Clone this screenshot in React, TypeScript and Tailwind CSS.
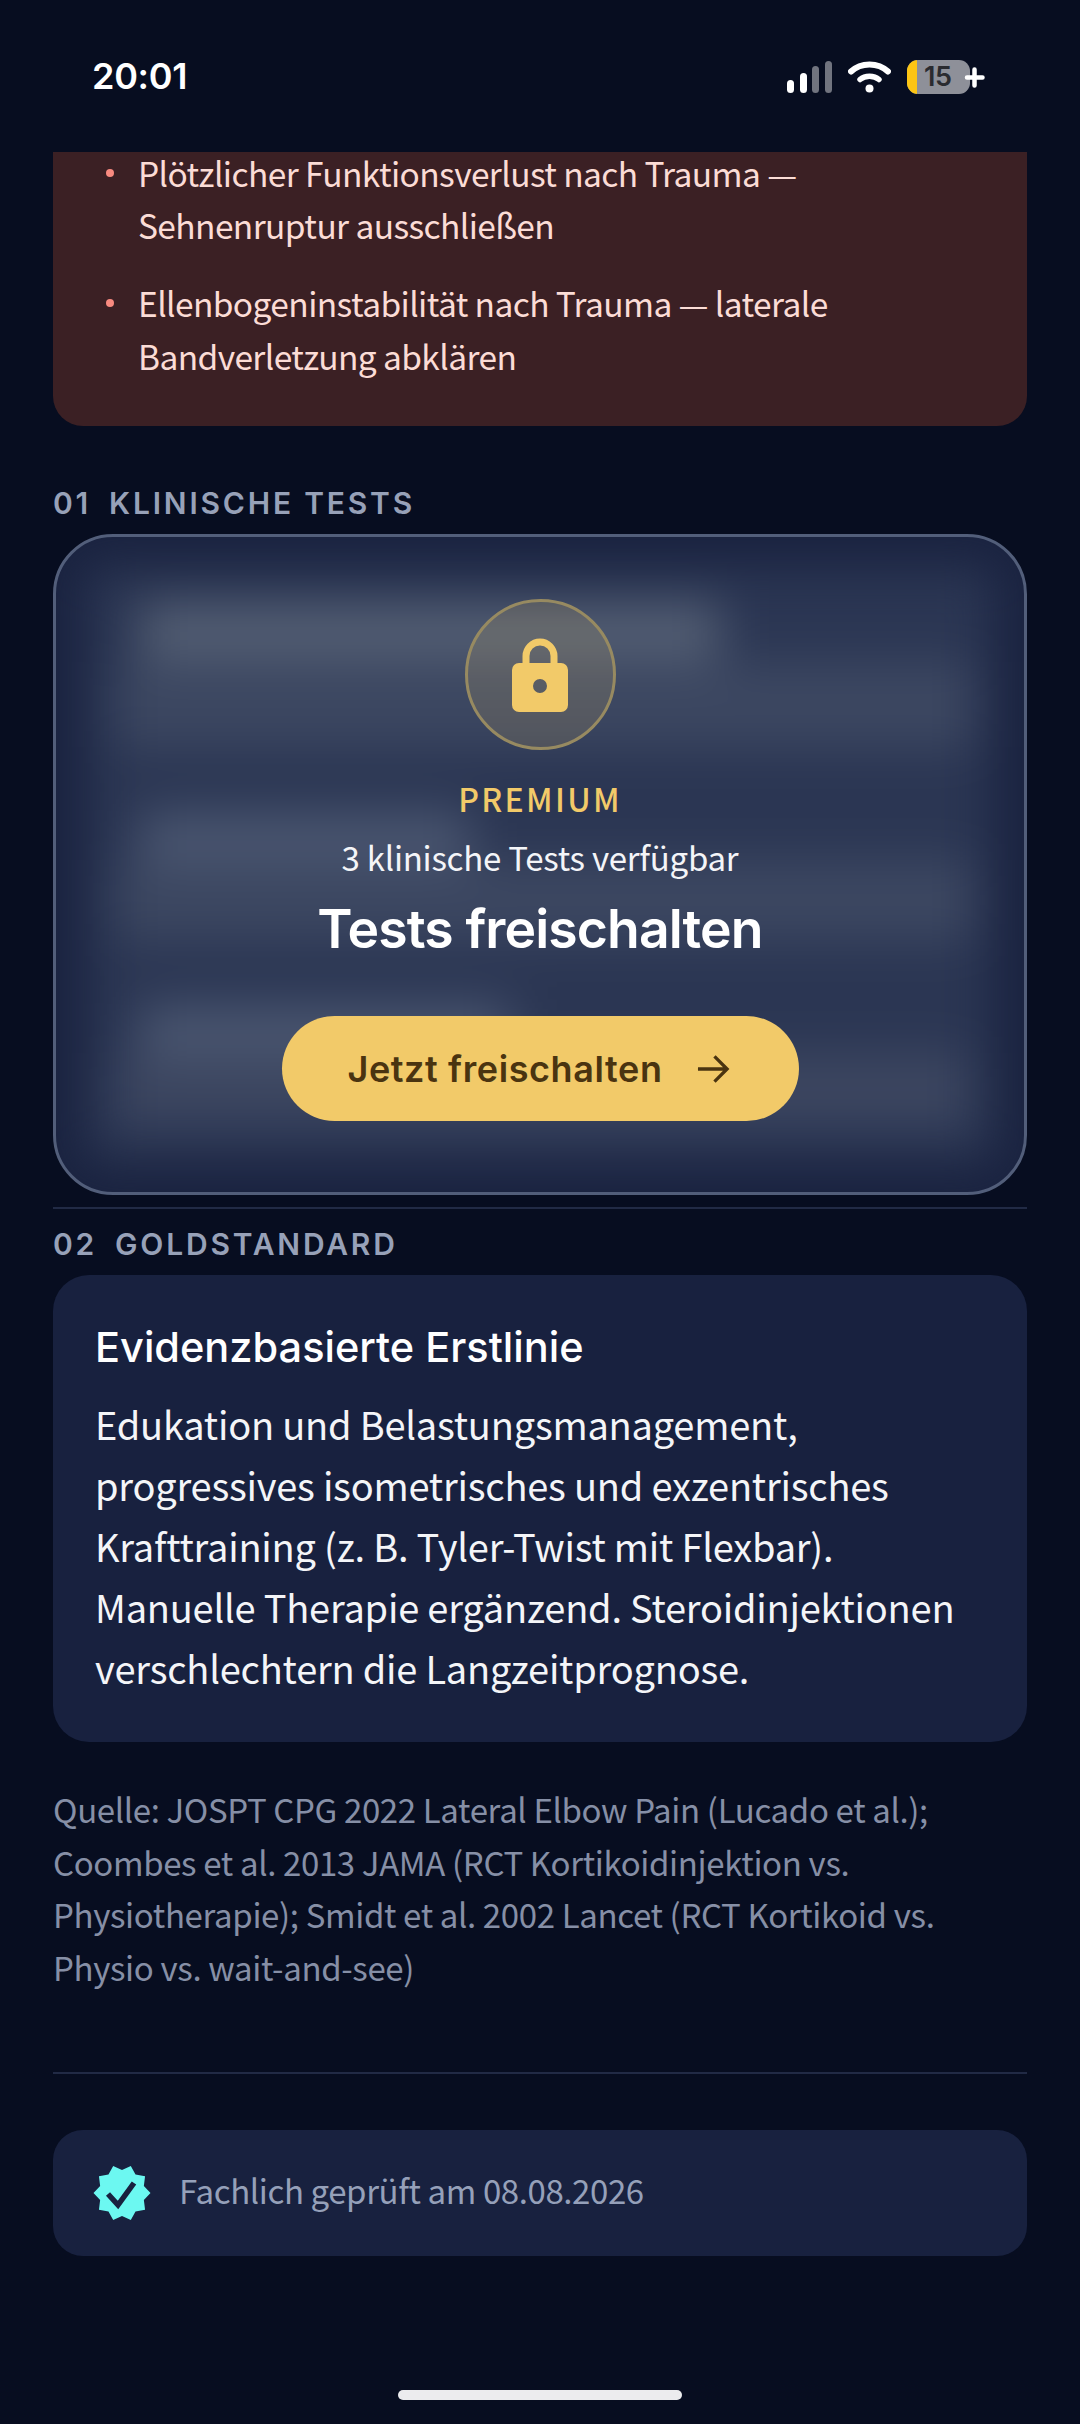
import React from "react";

const body = "font-['Noto_Sans_CJK_SC','Noto_Sans',sans-serif]";
const head = "font-['Inter','Noto_Sans',sans-serif]";

function Label({ n, t, cls }: { n: string; t: string; cls: string }) {
  return (
    <div className={`${head} flex h-[36px] items-center gap-[18px] text-[30px] leading-[36px] font-semibold tracking-[2.8px] text-[#97a1b8] ${cls}`}>
      <span>{n}</span>
      <span>{t}</span>
    </div>
  );
}

function Bullet({ a, b }: { a: string; b: string }) {
  return (
    <li className="flex">
      <span className="mt-[22px] mr-[24px] h-[8px] w-[8px] shrink-0 rounded-full bg-[#f98a80]" />
      <span>
        {a}
        <br />
        {b}
      </span>
    </li>
  );
}

const star = Array.from({ length: 20 }, (_, i) => {
  const r = i % 2 === 0 ? 28.5 : 23;
  const ang = (i * 18 * Math.PI) / 180;
  return `${(29 + r * Math.cos(ang)).toFixed(2)},${(28 + r * Math.sin(ang)).toFixed(2)}`;
}).join(" ");

export default function App() {
  return (
    <div className={`${body} flex h-[2424px] w-full flex-col overflow-hidden bg-[#070d20] px-[53px]`}>
      {/* Status bar */}
      <div className="-mx-[53px] flex h-[152px] shrink-0 items-start justify-between pt-[56px] pr-[92px] pl-[92px]">
        <span className={`${head} text-[36px] leading-[40px] font-semibold tracking-[-0.3px] text-white`}>20:01</span>
        <div className="mt-[4px] flex items-center gap-[16px]">
          <svg width="45" height="32" viewBox="0 0 45 32">
            <rect x="0" y="19" width="7" height="13" rx="3.5" fill="#fff" />
            <rect x="13" y="12" width="7" height="20" rx="3.5" fill="#fff" />
            <rect x="25" y="5" width="7" height="27" rx="3.5" fill="#71747f" />
            <rect x="38" y="0" width="7" height="32" rx="3.5" fill="#71747f" />
          </svg>
          <svg width="43" height="32" viewBox="0 0 43 32" fill="none" stroke="#fff" strokeLinecap="round">
            <path d="M3 10.5C13 1 30 1 40 10.5" strokeWidth="6" />
            <path d="M12 18.5C17 14 26 14 31 18.5" strokeWidth="5.5" />
            <circle cx="21.5" cy="27.5" r="4" fill="#fff" stroke="none" />
          </svg>
          <div className="relative flex h-[34px] w-[81px] items-center">
            <div className="relative flex h-[34px] w-[63px] items-center overflow-hidden rounded-[11px] bg-[#8e9099]">
              <div className="h-full w-[10px] bg-[#fdc513]" />
              <span className={`${head} ml-[7px] text-[27px] leading-[34px] font-semibold tracking-[-0.5px] text-[#2a2b30]`}>15</span>
            </div>
            <svg className="absolute top-[7px] left-[57px]" width="21" height="21" viewBox="0 0 21 21" stroke="#fff" strokeWidth="4.5" strokeLinecap="round">
              <path d="M10.5 2.5v16M3 10.5h15.5" />
            </svg>
          </div>
        </div>
      </div>

      {/* Warning card */}
      <div className="h-[274px] shrink-0 rounded-b-[30px] bg-[#3b2024] pl-[53px] text-[33.5px] leading-[52.5px] tracking-[-0.6px] text-[#fbdcd6]">
        <ul className="-mt-[5.5px] flex flex-col gap-[25.5px]">
          <Bullet a="Plötzlicher Funktionsverlust nach Trauma —" b="Sehnenruptur ausschließen" />
          <Bullet a="Ellenbogeninstabilität nach Trauma — laterale" b="Bandverletzung abklären" />
        </ul>
      </div>

      <Label n="01" t="KLINISCHE TESTS" cls="mt-[59px]" />

      {/* Locked card */}
      <div className="relative mt-[13px] flex h-[661px] shrink-0 flex-col items-center overflow-hidden rounded-[60px] border-[3px] border-[#525e7a] bg-[#1a2340]">
        <div className="absolute inset-0 blur-[24px]">
          <div className="absolute top-[30px] right-[30px] bottom-[30px] left-[30px] bg-[#2b3653]" />
          <div className="absolute top-[125px] right-[50px] left-[60px] h-[85px] bg-[#3c4761]" />
          <div className="absolute top-[65px] left-[84px] h-[58px] w-[580px] bg-[#535e73]" />
          <div className="absolute top-[323px] right-[50px] left-[60px] h-[80px] bg-[#3c4761]" />
          <div className="absolute top-[275px] left-[84px] h-[52px] w-[330px] bg-[#4a5670]" />
          <div className="absolute top-[516px] right-[55px] left-[60px] h-[72px] bg-[#3c4660]" />
          <div className="absolute top-[468px] left-[84px] h-[52px] w-[370px] bg-[#4a5670]" />
        </div>
        <div className="relative flex flex-col items-center">
          <div className="mt-[62px] flex h-[151px] w-[151px] items-center justify-center rounded-full border-[3px] border-[#978a61] bg-[#f2ca69]/15">
            <svg width="56" height="74" viewBox="0 0 56 74">
              <path d="M14 28V18a14 14 0 0 1 28 0v10" fill="none" stroke="#f2ca69" strokeWidth="7" />
              <path fillRule="evenodd" fill="#f2ca69" d="M7 25h42a7 7 0 0 1 7 7v35a7 7 0 0 1-7 7H7a7 7 0 0 1-7-7V32a7 7 0 0 1 7-7Zm21 16a7 7 0 1 0 0 14 7 7 0 0 0 0-14Z" />
            </svg>
          </div>
          <div className="mt-[28px] text-[32px] leading-[40px] font-medium tracking-[2.3px] text-[#f2ca69]">PREMIUM</div>
          <div className="mt-[19px] text-[33px] leading-[40px] tracking-[-0.25px] text-[#f4f5f8]">3 klinische Tests verfügbar</div>
          <div className={`${head} mt-[22px] text-[53.5px] leading-[60px] font-semibold tracking-[-0.9px] text-white`}>Tests freischalten</div>
          <div className="mt-[57px] flex h-[105px] w-[517px] items-center justify-center gap-[34px] rounded-full bg-[#f2ca69] pr-[3px] text-[#4a3410]">
            <span className={`${head} text-[36px] leading-[40px] font-semibold tracking-[0.6px]`}>Jetzt freischalten</span>
            <svg width="33" height="30" viewBox="0 0 34 30" fill="none" stroke="#4a3410" strokeWidth="3.4">
              <path d="M1 15h30M18 2l13 13-13 13" />
            </svg>
          </div>
        </div>
      </div>

      <div className="mt-[12px] h-[2px] shrink-0 bg-[#212a45]" />
      <Label n="02" t="GOLDSTANDARD" cls="mt-[17px]" />

      {/* Gold standard */}
      <div className="mt-[13px] flex h-[467px] shrink-0 flex-col rounded-[36px] bg-[#18213f] px-[42px] pt-[49px] text-white">
        <div className={`${head} text-[41.5px] leading-[46px] font-medium tracking-[0px]`}>Evidenzbasierte Erstlinie</div>
        <p className="mt-[23px] text-[38px] leading-[61px] tracking-[-0.22px] text-[#f4f5f8]">
          Edukation und Belastungsmanagement,
          <br />
          progressives isometrisches und exzentrisches
          <br />
          Krafttraining (z. B. Tyler-Twist mit Flexbar).
          <br />
          Manuelle Therapie ergänzend. Steroidinjektionen
          <br />
          verschlechtern die Langzeitprognose.
        </p>
      </div>

      <p className="mt-[41px] text-[33px] leading-[52.7px] tracking-[-0.36px] text-[#868fa6]">
        Quelle: JOSPT CPG 2022 Lateral Elbow Pain (Lucado et al.);
        <br />
        Coombes et al. 2013 JAMA (RCT Kortikoidinjektion vs.
        <br />
        Physiotherapie); Smidt et al. 2002 Lancet (RCT Kortikoid vs.
        <br />
        Physio vs. wait-and-see)
      </p>

      <div className="mt-[78px] h-[2px] shrink-0 bg-[#212a45]" />

      {/* Verified */}
      <div className="mt-[56px] flex h-[126px] shrink-0 items-center rounded-[30px] bg-[#18213f] pl-[40px]">
        <svg width="58" height="56" viewBox="0 0 58 56">
          <polygon fill="#6cf8f1" points={star} />
          <path d="M15 29l10 11 16-22" fill="none" stroke="#18213f" strokeWidth="5.5" />
        </svg>
        <span className="-mt-[6px] ml-[28px] text-[33px] leading-[44px] tracking-[-0.4px] text-[#95a0b9]">Fachlich geprüft am 08.08.2026</span>
      </div>

      <div className="mx-auto mt-[134px] h-[10px] w-[284px] shrink-0 rounded-full bg-[#ececee]" />
    </div>
  );
}
